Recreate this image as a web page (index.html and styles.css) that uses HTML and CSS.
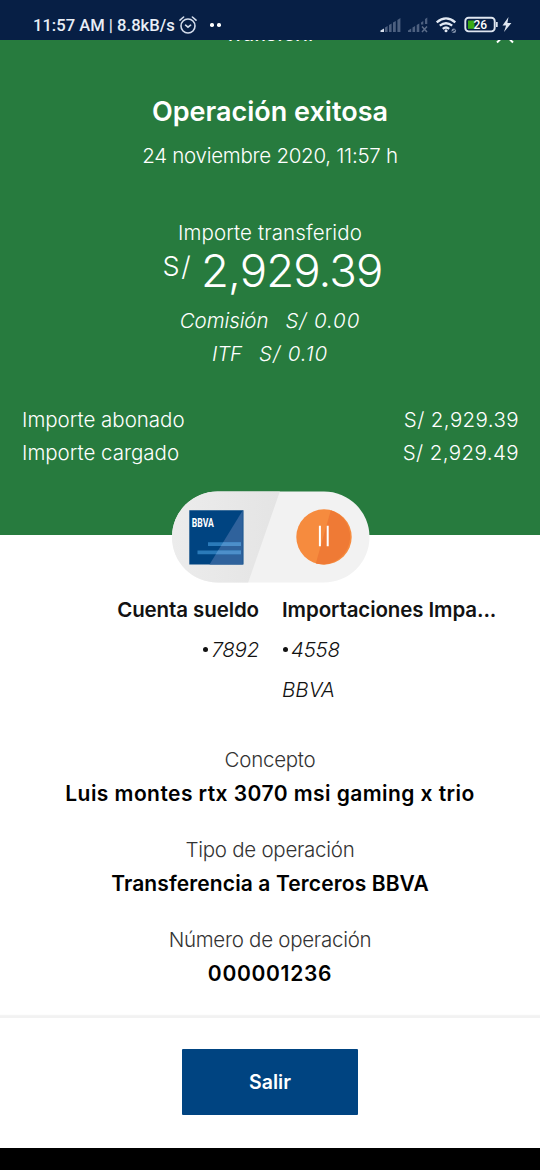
FILE: index.html
```html
<!DOCTYPE html>
<html lang="es">
<head>
<meta charset="utf-8">
<title>Operación exitosa</title>
<link rel="stylesheet" href="styles.css">
</head>
<body>
<div class="screen">
  <header class="status">
    <div class="status-left">
      <span class="clock">11:57 AM | 8.8kB/s</span>
      <svg class="alarm" width="18" height="20" viewBox="0 0 18 20" fill="none" stroke="#d3dceb" stroke-width="1.6" stroke-linecap="round">
        <circle cx="9" cy="11" r="7"/><path d="M1 5.2 4.6 2M17 5.2 13.4 2M6.6 10.2 9 12.2l2.6-2"/>
      </svg>
      <span class="dot first"></span><span class="dot"></span>
    </div>
    <svg class="status-icons" width="134" height="24" viewBox="378 13 134 24">
      <g fill="#4d6080">
        <path fill="#d8e0ec" d="M380.5 32v-1.5l3.5-2V32z"/>
        <path d="M385 27.5l2.6-1.5v6H385zM389 25l2.6-1.5V32H389zM393 22.5l2.8-1.5v11H393zM397.4 20l3-2v14h-3z"/>
        <path d="M408 32v-1.5l3.2-2V32zM412.5 27.5l2.6-1.5v6h-2.6zM416.7 25l2.6-1.5V32h-2.6zM421 22.5l2.3-1.5v3.5H421zM425 19l2.3-1.5V24H425z"/>
      </g>
      <path d="M422 26.5l5 5.5M427 26.5l-5 5.5" stroke="#5c6d8a" stroke-width="1.5"/>
      <g fill="none" stroke="#e2e9f3" stroke-width="2.3">
        <path d="M436.7 22.3q9.3-7.8 18.6 0M439.8 25.7q6.2-5 12.4 0M442.8 28.8q3.2-2.5 6.4 0"/>
      </g>
      <circle cx="446" cy="30.8" r="1.5" fill="#e2e9f3"/>
      <circle cx="453.8" cy="30.8" r="2.3" fill="#8292ab"/><path d="M452 32l3.5-2.4" stroke="#071f45"/>
      <rect x="465.3" y="17.8" width="29.4" height="13.6" rx="3.3" fill="none" stroke="#dfe6f0" stroke-width="1.9"/>
      <path d="M496 22h1.7v5H496z" fill="#dfe6f0"/>
      <rect x="468" y="20.5" width="6.5" height="8.3" fill="#3aa915"/>
      <text class="battery-text" x="480.3" y="29.3" text-anchor="middle">26</text>
      <path d="M508.5 17l-6 8.6h3.6L504 32l7.4-9h-4z" fill="#dfe6f0"/>
    </svg>
  </header>

  <section class="summary">
    <div class="scrolled-header">
      <span class="scrolled-title">Transferir</span>
      <svg class="close" width="18" height="4" viewBox="0 0 18 4"><path d="M5.5-2 1 2.5M12.5-2 17 2.5" stroke="#fff" stroke-width="2"/></svg>
    </div>
    <h1 class="title">Operación exitosa</h1>
    <p class="date">24 noviembre 2020, 11:57 h</p>
    <p class="amount-label">Importe transferido</p>
    <p class="amount"><span class="currency">S/</span><span class="figure">2,929.39</span></p>
    <p class="fee"><span>Comisión</span><span class="fee-value">S/ 0.00</span></p>
    <p class="fee itf"><span>ITF</span><span class="fee-value">S/ 0.10</span></p>
    <dl class="totals">
      <div class="total"><dt>Importe abonado</dt><dd>S/ 2,929.39</dd></div>
      <div class="total"><dt>Importe cargado</dt><dd>S/ 2,929.49</dd></div>
    </dl>
    <div class="accounts-pill">
      <svg width="198" height="92" viewBox="0 0 198 92">
        <defs>
          <clipPath id="pill"><rect x="0" y="0.5" width="197.5" height="91" rx="45.5"/></clipPath>
          <linearGradient id="shade"><stop offset="0" stop-color="#ececec"/><stop offset="1" stop-color="#e4e4e4"/></linearGradient>
        </defs>
        <g clip-path="url(#pill)">
          <path fill="#f2f2f2" d="M0 0h198v92H0z"/>
          <path fill="url(#shade)" d="M0 0h108L76 92H0z"/>
        </g>
        <path fill="#004481" d="M17.3 19.3h54.2v54.2H17.3z"/>
        <path fill="#2f629c" d="M70.8 19.3v54.2H37.5z"/>
        <path fill="#2a7ab9" d="M36 51.3h33v3.8H36zM25.5 59.5h43.5v3.8H25.5z"/>
        <path fill="#4d8fca" d="M51.2 51.3H69v3.8H48.8zM46 59.5h23v3.8H43.7z"/>
        <text class="card-logo" x="19.8" y="36.3" textLength="22" lengthAdjust="spacingAndGlyphs">BBVA</text>
        <circle cx="152" cy="46" r="27.7" fill="#f68b3e"/>
        <path fill="#ef7a35" d="M158.8 19.2A27.7 27.7 0 0 1 143.8 72.5z"/>
        <path fill="#fff" d="M146.9 34.8h2v20.5h-2zM154.7 34.8h2v20.5h-2z"/>
      </svg>
    </div>
  </section>

  <main class="details">
    <div class="parties">
      <div class="party origin">
        <p class="party-name">Cuenta sueldo</p>
        <p class="party-info"><span class="bullet"></span>7892</p>
      </div>
      <div class="party">
        <p class="party-name">Importaciones Impa...</p>
        <p class="party-info"><span class="bullet"></span>4558</p>
        <p class="party-info bank">BBVA</p>
      </div>
    </div>
    <dl class="fields">
      <div class="field"><dt>Concepto</dt><dd class="concept">Luis montes rtx 3070 msi gaming x trio</dd></div>
      <div class="field"><dt>Tipo de operación</dt><dd class="kind">Transferencia a Terceros BBVA</dd></div>
      <div class="field"><dt>Número de operación</dt><dd class="number">000001236</dd></div>
    </dl>
  </main>

  <footer class="actions"><button class="exit">Salir</button></footer>
  <div class="nav-bar"></div>
</div>
</body>
</html>
```
FILE: styles.css
```css
* { box-sizing: border-box; margin: 0; padding: 0; }

body { background: #fff; }

.screen {
  display: flex;
  flex-direction: column;
  width: 540px;
  height: 1170px;
  overflow: hidden;
  background: #fff;
  font: 300 20.5px/33px Inter, "Liberation Sans", sans-serif;
}
.screen > * { flex-shrink: 0; }

.status {
  display: flex;
  justify-content: space-between;
  height: 40px;
  padding: 13px 28px 0 33px;
  background: #071f45;
  color: #e9eef6;
}
.status-left { display: flex; align-items: center; height: 24px; }
.clock { width: 142px; padding-top: 2px; font: 500 16.6px/24px Roboto, sans-serif; white-space: nowrap; }
.alarm { margin-left: 4px; }
.dot { width: 3.5px; height: 3.5px; margin-left: 3.5px; border-radius: 50%; background: #fff; }
.dot.first { margin-left: 13px; }
.battery-text { font: 500 12px Roboto, sans-serif; fill: #fff; }

.summary {
  display: flex;
  flex-direction: column;
  height: 495px;
  background: #277b3e;
  color: #fff;
  text-align: center;
}
.summary > * { flex-shrink: 0; }
.scrolled-header {
  display: flex;
  justify-content: center;
  align-items: flex-end;
  position: relative;
  height: 4px;
  overflow: hidden;
}
.scrolled-title { font-size: 19px; font-weight: 500; line-height: 18px; letter-spacing: 0.3px; }
.close { position: absolute; top: 0; right: 26px; }

.title { margin-top: 51px; font-size: 27px; font-weight: 600; line-height: 33px; }
.date { margin-top: 11px; letter-spacing: -0.27px; }
.amount-label { margin-top: 44px; letter-spacing: 0.12px; }
.amount { display: flex; justify-content: center; gap: 9px; height: 44px; margin-left: 5px; line-height: 44px; }
.currency { margin-top: -4px; font-size: 27px; letter-spacing: 1.5px; }
.figure { font-size: 45.5px; letter-spacing: -0.9px; }
.fee { display: flex; justify-content: center; gap: 17px; margin-top: 11px; font-style: italic; letter-spacing: -0.1px; }
.fee-value { letter-spacing: 0.9px; }
.itf { margin-top: 0; }
.totals { margin-top: 33px; padding: 0 21px 0 22px; }
.total { display: flex; justify-content: space-between; }
.total dd { letter-spacing: 0.4px; }
.accounts-pill { height: 92px; margin: 22px 0 0 172px; text-align: left; }
.accounts-pill svg { display: block; position: relative; }
.card-logo { font: 700 13.5px Roboto, sans-serif; fill: #fff; }

.details { height: 481px; padding-top: 58px; color: #121212; text-align: center; }
.parties { display: flex; gap: 23px; text-align: left; }
.party { flex: 1 1 0; }
.party.origin { flex: 0 0 259px; text-align: right; }
.party-name { font-weight: 600; letter-spacing: -0.1px; }
.party-info { margin-top: 7px; font-style: italic; letter-spacing: -0.25px; }
.bullet { display: inline-block; width: 5px; height: 5px; margin: 0 3px 5px 1px; border-radius: 50%; background: #121212; }
.bank { letter-spacing: 0; }
.fields { display: flex; flex-direction: column; gap: 24px; margin-top: 37px; }
.field dt { color: #333; letter-spacing: -0.27px; }
.field dd { height: 33px; padding-top: 1px; color: #000; font-size: 21px; font-weight: 600; }
.concept { letter-spacing: 0.44px; }
.kind { letter-spacing: 0.12px; }
.number { letter-spacing: 0.7px; }

.actions { height: 132px; padding: 31px 0 0; border-top: 2px solid #f2f2f2; text-align: center; box-shadow: 0 -1px 1px #f4f4f4; }
.exit {
  display: block;
  width: 176px;
  height: 66px;
  margin: 0 auto;
  border: 0;
  border-radius: 1px;
  background: #004481;
  color: #fff;
  font: 600 19.5px Inter, sans-serif;
}
.nav-bar { height: 22px; background: #000; }
```
